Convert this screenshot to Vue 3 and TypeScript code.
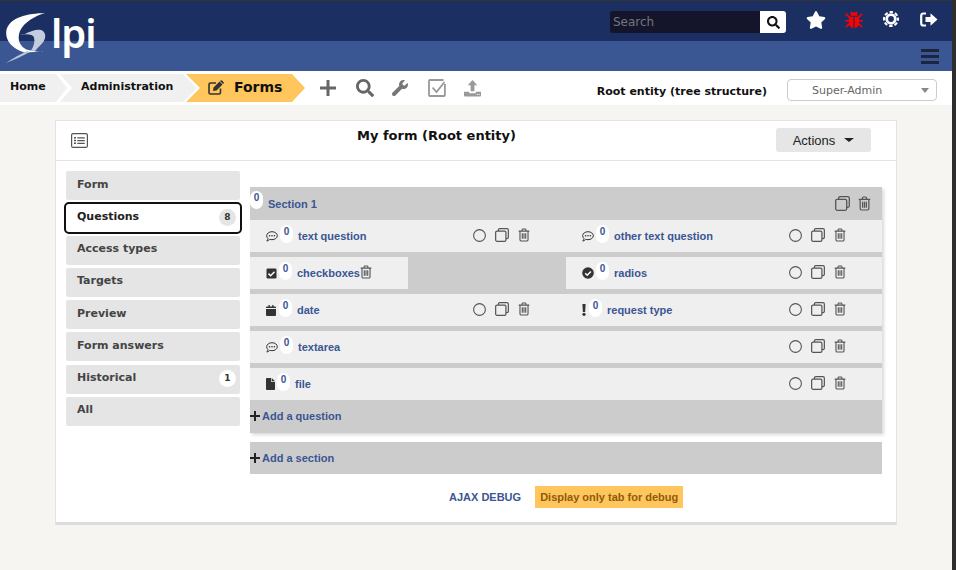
<script setup lang="ts">
interface Question {
  icon: string
  name: string
  span: number
  start?: number
  actions: 'full' | 'trash'
}

const tabs = [
  { label: 'Form' },
  { label: 'Questions', badge: '8', active: true },
  { label: 'Access types' },
  { label: 'Targets' },
  { label: 'Preview' },
  { label: 'Form answers' },
  { label: 'Historical', badge: '1' },
  { label: 'All' },
]

const questions: Question[] = [
  { icon: 'i-comment', name: 'text question', span: 2, actions: 'full' },
  { icon: 'i-comment', name: 'other text question', span: 2, actions: 'full' },
  { icon: 'i-check', name: 'checkboxes', span: 1, actions: 'trash' },
  { icon: 'i-radio', name: 'radios', span: 2, start: 3, actions: 'full' },
  { icon: 'i-cal', name: 'date', span: 2, actions: 'full' },
  { icon: 'i-bang', name: 'request type', span: 2, actions: 'full' },
  { icon: 'i-comment', name: 'textarea', span: 4, actions: 'full' },
  { icon: 'i-file', name: 'file', span: 4, actions: 'full' },
]

function cellStyle(q: Question) {
  return { gridColumn: q.start ? `${q.start} / span ${q.span}` : `span ${q.span}` }
}
</script>

<template>
  <div class="page">
    <svg class="sprite" xmlns="http://www.w3.org/2000/svg">
      <symbol id="i-trash" viewBox="0 0 14 16">
        <path d="M.8 3.500h12.400M4.800 3.200V2q0-1 1-1h2.400q1 0 1 1v1.200M2.300 3.700v9.800q0 1.500 1.500 1.500h6.400q1.500 0 1.500-1.500V3.700M5 6v6.500M7 6v6.500M9 6v6.500" fill="none" stroke="currentColor" stroke-width="1.300"/>
      </symbol>
      <symbol id="i-clone" viewBox="0 0 15 15">
        <path d="M3.700 3.200V2.200Q3.700.7 5.200.7h7.600q1.500 0 1.500 1.500v7.600q0 1.500-1.500 1.500h-1" fill="none" stroke="currentColor" stroke-width="1.300"/>
        <rect x="0.700" y="3.300" width="11" height="11" rx="1.500" fill="none" stroke="currentColor" stroke-width="1.300"/>
      </symbol>
      <symbol id="i-comment" viewBox="0 0 12 11">
        <path d="M6 .7c3 0 5.300 1.800 5.300 4S9 8.700 6 8.700c-.8 0-1.500-.1-2.200-.4C3 9.200 1.800 10 .8 10c.6-.7 1.100-1.500 1.200-2.500C1.100 6.800.7 5.800.7 4.700c0-2.200 2.300-4 5.300-4z" fill="none" stroke="currentColor" stroke-width="1"/>
        <circle cx="3.600" cy="4.700" r=".8" fill="currentColor"/><circle cx="6" cy="4.700" r=".8" fill="currentColor"/><circle cx="8.400" cy="4.700" r=".8" fill="currentColor"/>
      </symbol>
      <symbol id="i-check" viewBox="0 0 11 11">
        <rect width="10" height="10" y=".5" x=".5" rx="1.300" fill="currentColor"/>
        <path d="M2.500 5.600l2.100 2.100 3.900-4" fill="none" stroke="#fff" stroke-width="1.500"/>
      </symbol>
      <symbol id="i-radio" viewBox="0 0 12 12">
        <circle cx="6" cy="6" r="5.800" fill="currentColor"/>
        <path d="M3.200 6.200l2 2 3.700-3.800" fill="none" stroke="#fff" stroke-width="1.500"/>
      </symbol>
      <symbol id="i-cal" viewBox="0 0 10 11">
        <path d="M0 4h10v6q0 1-1 1H1q-1 0-1-1zM1 1.500h1.500V0h1.300v1.500h2.400V0h1.300v1.500H9q1 0 1 1V3H0v-.5q0-1 1-1z" fill="currentColor"/>
      </symbol>
      <symbol id="i-bang" viewBox="0 0 4 12">
        <path d="M.4 0h3.200l-.5 8H.9z" fill="currentColor"/><circle cx="2" cy="10.300" r="1.600" fill="currentColor"/>
      </symbol>
      <symbol id="i-file" viewBox="0 0 9 12">
        <path d="M0 .8Q0 0 .8 0H5v3.300q0 .7.7.7H9v7.200q0 .8-.8.8H.8Q0 12 0 11.200zM5.700 0L9 3.300H5.700z" fill="currentColor"/>
      </symbol>
    </svg>

    <header class="top-bar">
      <div class="logo">
        <svg class="logo-g" viewBox="0 0 46 52" width="46" height="52">
          <path d="M17 22c7-4 14-6 18-5 3 1 5 4 4 8-1 5-6 8-10 13l-4-.5c3-4 4-9 3-13-1-3-7-4-14-2.500z" fill="#c3ccde"/>
          <path d="M39 0C22 .5 3 4 .3 18c-1 9 5 16 14 20l4 1.500 19-1c-5 .5-12-.5-17-2C13 33 11 25 14 18 18 9 29 3 39 0z" fill="#fff"/>
          <path d="M0 50C7 45 15 41 21 38l3 1C16 43 8 47 0 50z" fill="#b9c4da"/>
        </svg>
        <span class="logo-text">lpi</span>
      </div>
      <div class="top-main">
        <div class="search">
          <span class="search-input">Search</span>
          <span class="search-btn">
            <svg viewBox="0 0 512 512" width="13" height="13"><path fill="#111" d="M505 442.700L405.300 343c-4.500-4.500-10.600-7-17-7H372c27.600-35.300 44-79.700 44-128C416 93.100 322.900 0 208 0S0 93.100 0 208s93.100 208 208 208c48.300 0 92.700-16.400 128-44v16.300c0 6.400 2.500 12.500 7 17l99.700 99.700c9.400 9.400 24.600 9.400 33.900 0l28.300-28.300c9.400-9.400 9.400-24.600.1-34zM208 336c-70.700 0-128-57.200-128-128 0-70.700 57.200-128 128-128 70.700 0 128 57.200 128 128 0 70.700-57.200 128-128 128z"/></svg>
          </span>
        </div>
        <svg class="t-icon star" viewBox="0 0 576 512" width="20" height="18"><path fill="#fff" d="M259.300 17.800L194 150.200 47.900 171.500c-26.200 3.800-36.700 36.100-17.700 54.600l105.700 103-25 145.500c-4.500 26.300 23.200 46 46.400 33.700L288 439.600l130.700 68.700c23.200 12.200 50.900-7.400 46.400-33.700l-25-145.500 105.700-103c19-18.500 8.500-50.800-17.700-54.600L382 150.200 316.700 17.800c-11.700-23.600-45.600-23.900-57.400 0z"/></svg>
        <svg class="t-icon bug" viewBox="0 0 18 18" width="18" height="18">
          <path fill="#f00" d="M5.500 4.800a3.500 3.500 0 0 1 7 0zM4 5.800h4.400V17c-2.600-.3-4.400-2-4.400-4.500zM9.600 5.800H14v6.700c0 2.500-1.800 4.200-4.400 4.500z"/>
          <path d="M.8 2.800L4.500 6.500M17.200 2.800L13.500 6.500M.3 9.700h4M13.700 9.700h4M.8 16l3.500-3.200M17.200 16l-3.500-3.200M6 1l1.300 2M12 1l-1.300 2" stroke="#f00" stroke-width="1.600" fill="none"/>
        </svg>
        <svg class="t-icon gear" viewBox="0 0 16 16" width="16" height="16">
          <circle cx="8" cy="8" r="7" fill="none" stroke="#fff" stroke-width="2" stroke-dasharray="3.500 2" stroke-dashoffset="1.700"/>
          <circle cx="8" cy="8" r="4.300" fill="none" stroke="#fff" stroke-width="2.800"/>
        </svg>
        <svg class="t-icon signout" viewBox="0 0 18 15" width="18" height="15">
          <path d="M6 1.500H3.500A2.300 2.300 0 0 0 1.200 3.800v7.400a2.300 2.300 0 0 0 2.300 2.300H6" fill="none" stroke="#fff" stroke-width="2.200"/>
          <path fill="#fff" d="M5.500 5h5V1.300L17.500 7.500l-7 6.200V10h-5z"/>
        </svg>
      </div>
    </header>
    <div class="sub-bar">
      <svg viewBox="0 0 18 15" width="18" height="15"><path d="M0 0h18v3H0zM0 6h18v3H0zM0 12h18v3H0z" fill="#1c2540"/></svg>
    </div>

    <nav class="crumb-bar">
      <div class="crumbs">
        <span class="crumb home">Home</span>
        <span class="crumb admin">Administration</span>
        <span class="crumb forms">
          <svg viewBox="0 0 16 15" width="16" height="15">
            <path d="M12.500 8.500v4Q12.500 14 11 14H2.500Q1 14 1 12.500V4.500Q1 3 2.500 3H8" fill="none" stroke="#333" stroke-width="1.600"/>
            <path d="M5.500 7.500L11.500 1.500l3 3-6 6-3.500.5zM12.500.5q.8-.6 1.500 0l1.500 1.500q.6.7 0 1.500l-.5.500-3-3z" fill="#333"/>
          </svg>
          Forms
        </span>
      </div>
      <div class="tools">
        <svg class="tool-plus" viewBox="0 0 16 16" width="16" height="16"><path d="M6.500 0h3v6.500H16v3H9.500V16h-3V9.500H0v-3h6.500z" fill="#666"/></svg>
        <svg class="tool-search" viewBox="0 0 512 512" width="18" height="18"><path fill="#666" d="M505 442.700L405.300 343c-4.500-4.500-10.600-7-17-7H372c27.600-35.300 44-79.700 44-128C416 93.100 322.900 0 208 0S0 93.100 0 208s93.100 208 208 208c48.300 0 92.700-16.400 128-44v16.300c0 6.400 2.500 12.500 7 17l99.700 99.700c9.400 9.400 24.600 9.400 33.900 0l28.300-28.300c9.400-9.400 9.400-24.600.1-34zM208 336c-70.700 0-128-57.200-128-128 0-70.700 57.200-128 128-128 70.700 0 128 57.200 128 128 0 70.700-57.200 128-128 128z"/></svg>
        <svg class="tool-wrench" viewBox="0 0 512 512" width="16" height="16"><path fill="#777" d="M507.730 109.100c-2.240-9.030-13.540-12.090-20.120-5.510l-74.360 74.360-67.880-11.310-11.310-67.880 74.360-74.360c6.620-6.620 3.430-17.900-5.660-20.160-47.380-11.740-99.550.91-136.580 37.930-39.640 39.640-50.550 97.100-34.050 147.200L18.740 402.760c-24.990 24.990-24.990 65.510 0 90.500 24.990 24.990 65.510 24.990 90.500 0l213.210-213.210c50.120 16.710 107.470 5.680 147.370-34.220 37.070-37.070 49.700-89.320 37.910-136.730z"/></svg>
        <svg class="tool-check" viewBox="0 0 18 18" width="18" height="18"><path d="M16.900 5v11q0 1-1 1H2q-1 0-1-1V2q0-1 1-1h13.500" fill="none" stroke="#999" stroke-width="1.800"/><path d="M4.500 8.500l4 4.500L16.500 3" fill="none" stroke="#999" stroke-width="1.800"/></svg>
        <svg viewBox="0 0 18 18" width="17" height="17"><path d="M9 0l5 5.500h-3v6.500H7V5.500H4zM0 12.500h5.500V14h7v-1.500H18v4q0 1-1 1H1q-1 0-1-1z" fill="#999"/><path d="M13.500 15.300h1.200M15.600 15.300h1.200" stroke="#fff" stroke-width="1"/></svg>
      </div>
      <div class="entity">Root entity (tree structure)</div>
      <div class="profile"><span>Super-Admin</span><i></i></div>
    </nav>

    <main class="content">
      <section class="head-card">
        <svg class="list-icon" viewBox="0 0 17 15" width="17" height="15">
          <rect x=".6" y=".6" width="15.800" height="13.800" rx="1.500" fill="none" stroke="#555" stroke-width="1.200"/>
          <path d="M3 4h2v1.500H3zM3 6.800h2v1.500H3zM3 9.600h2v1.500H3zM6.300 4.200h7.500v1.200H6.300zM6.300 7h7.500v1.200H6.300zM6.300 9.800h7.500V11H6.300z" fill="#555"/>
        </svg>
        <h1>My form (Root entity)</h1>
        <button class="actions" type="button">Actions<i></i></button>
      </section>

      <section class="body-card">
        <aside class="tabs">
          <div v-for="t in tabs" :key="t.label" class="tab" :class="{ active: t.active }">
            <span>{{ t.label }}</span>
            <b v-if="t.badge" class="tab-badge">{{ t.badge }}</b>
          </div>
        </aside>

        <div class="editor">
          <div class="section">
            <div class="section-head">
              <span class="count">0</span>
              <a class="link sec-title">Section 1</a>
              <span class="sec-actions">
                <svg width="15" height="15"><use href="#i-clone"/></svg>
                <svg width="13" height="15"><use href="#i-trash"/></svg>
              </span>
            </div>
            <div class="grid">
              <div v-for="q in questions" :key="q.name" class="cell" :style="cellStyle(q)">
                <svg class="q-icon" :class="q.icon"><use :href="'#' + q.icon"/></svg>
                <span class="count">0</span>
                <a class="link q-name">{{ q.name }}</a>
                <span class="q-actions" :class="q.actions">
                  <template v-if="q.actions === 'full'">
                    <svg width="13" height="13" viewBox="0 0 13 13"><circle cx="6.500" cy="6.500" r="5.900" fill="none" stroke="#555" stroke-width="1.100"/></svg>
                    <svg width="14" height="14"><use href="#i-clone"/></svg>
                  </template>
                  <svg width="12" height="14"><use href="#i-trash"/></svg>
                </span>
              </div>
            </div>
            <div class="add-row first"><span class="plus"></span><a class="link">Add a question</a></div>
          </div>
          <div class="add-row add-section"><span class="plus"></span><a class="link">Add a section</a></div>
          <div class="debug">
            <a class="link ajax">AJAX DEBUG</a>
            <span class="debug-btn">Display only tab for debug</span>
          </div>
        </div>
      </section>
    </main>
  </div>
</template>

<style>
html, body { margin: 0; background: #f6f5f1; }
</style>

<style scoped>
.page {
  width: 952px;
  height: 570px;
  box-sizing: content-box;
  border-right: 4px solid #2e2e2e;
  background: #f6f5f1;
  font-family: "DejaVu Sans", sans-serif;
  position: relative;
  overflow: hidden;
}
.sprite { display: none; }
svg { flex: none; display: block; }

.top-bar {
  height: 40px;
  border-top: 1px solid #333;
  background: #1b2f62;
  display: flex;
  justify-content: flex-end;
}
.sub-bar {
  height: 30px;
  background: #3a5693;
  display: flex;
  justify-content: flex-end;
  align-items: center;
  padding-right: 13px;
}
.logo {
  position: absolute;
  left: 6px;
  top: 13px;
  display: flex;
}
.logo-text {
  position: absolute;
  left: 45px;
  top: -6px;
  color: #fff;
  font: 600 40px/52px "Noto Sans", sans-serif;
  letter-spacing: -1px;
}
.top-main {
  display: flex;
  align-items: flex-start;
  padding-top: 10px;
  padding-right: 14px;
}
.search {
  display: flex;
  width: 176px;
  height: 22px;
  border-radius: 3px;
  overflow: hidden;
  margin-right: 20px;
}
.search-input {
  flex: 1;
  background: #14152a;
  color: #74757f;
  font-size: 12px;
  line-height: 22px;
  padding-left: 3px;
}
.search-btn {
  width: 26px;
  background: #fff;
  display: flex;
  align-items: center;
  justify-content: center;
}
.star { margin-right: 19px; }
.bug { margin-right: 20px; }
.gear { margin-right: 21px; }
.signout { margin-top: 1px; }

.crumb-bar {
  height: 34px;
  background: #fff;
  display: flex;
  align-items: center;
}
.crumbs { display: flex; height: 28px; }
.crumb {
  height: 28px;
  display: flex;
  align-items: center;
  font-weight: 700;
  font-size: 11px;
  color: #111;
  background: #f0f0f0;
  flex: none;
  box-sizing: border-box;
  padding-bottom: 4px;
}
.home {
  width: 67px;
  padding-left: 10px;
  clip-path: polygon(0 0, 56px 0, 67px 50%, 56px 100%, 0 100%);
}
.admin {
  width: 137px;
  margin-left: -7px;
  padding-left: 21px;
  clip-path: polygon(0 0, 123px 0, 137px 50%, 123px 100%, 0 100%, 12px 50%);
}
.forms {
  width: 119px;
  margin-left: -11px;
  padding-left: 22px;
  padding-bottom: 2px;
  gap: 10px;
  font-size: 14px;
  background: #ffc65d;
  clip-path: polygon(0 0, 106px 0, 119px 50%, 106px 100%, 0 100%, 14px 50%);
}
.tools {
  display: flex;
  align-items: center;
  margin-left: 15px;
}
.tool-plus, .tool-wrench { margin-right: 20px; }
.tool-search, .tool-check { margin-right: 18px; }
.entity {
  font-weight: 700;
  font-size: 11px;
  color: #111;
  margin-left: auto;
  margin-right: 20px;
  margin-top: 6px;
  white-space: nowrap;
  flex: none;
}
.profile {
  width: 150px;
  height: 22px;
  box-sizing: border-box;
  border: 1px solid #ccc;
  border-radius: 4px;
  margin-top: 4px;
  margin-right: 15px;
  display: flex;
  align-items: center;
  font-size: 11px;
  color: #666;
  padding-left: 24px;
  position: relative;
}
.profile i {
  position: absolute;
  right: 7px;
  top: 8px;
  border: 4px solid transparent;
  border-top: 5px solid #888;
  border-bottom: 0;
}

.content {
  width: 842px;
  margin: 15px 0 0 55px;
}
.head-card {
  height: 41px;
  box-sizing: border-box;
  background: #fff;
  border: 1px solid #e3e3e3;
  display: flex;
  align-items: flex-start;
  position: relative;
}
.list-icon { margin: 12px 0 0 15px; }
.head-card h1 {
  margin: 6px 0 0 269px;
  font-size: 13px;
  line-height: 18px;
  font-weight: 700;
  color: #111;
  white-space: nowrap;
}
.actions {
  position: absolute;
  left: 720px;
  top: 7px;
  width: 95px;
  height: 24px;
  border: 0;
  border-radius: 3px;
  background: #e6e6e6;
  color: #222;
  font: 13px "Liberation Sans", sans-serif;
  display: flex;
  align-items: center;
  justify-content: center;
  gap: 9px;
  padding: 0;
}
.actions i {
  border: 5px solid transparent;
  border-top: 4px solid #222;
  border-bottom: 0;
}
.body-card {
  height: 364px;
  box-sizing: border-box;
  background: #fff;
  border: 1px solid #e3e3e3;
  border-top: 0;
  border-bottom: 3px solid #dcdcdc;
  display: flex;
}
.tabs {
  width: 174px;
  margin: 10px 0 0 10px;
  flex: none;
}
.tab {
  height: 29px;
  margin-bottom: 3.280px;
  background: #e5e5e5;
  border-radius: 2px;
  font-weight: 700;
  font-size: 11px;
  color: #444;
  display: flex;
  padding: 6.600px 4px 0 11px;
  box-sizing: border-box;
  position: relative;
}
.tab.active {
  background: #fff;
  color: #222;
  outline: 2px solid #111;
  border-radius: 3px;
  height: 28px;
  margin-bottom: 4.280px;
  top: 1px;
  padding-top: 5.600px;
}
.tab-badge {
  position: absolute;
  right: 4px;
  top: 5px;
  width: 17px;
  height: 17px;
  border-radius: 50%;
  background: #fff;
  color: #333;
  font-size: 9px;
  line-height: 17px;
  text-align: center;
}
.active .tab-badge { background: #e5e5e5; }

.editor {
  width: 632px;
  margin: 26px 0 0 10px;
  flex: none;
}
.link {
  font-family: "Liberation Sans", sans-serif;
  font-weight: 700;
  font-size: 11px;
  color: #3a5693;
  white-space: nowrap;
}
.count {
  width: 13px;
  height: 18px;
  border-radius: 7px;
  background: #fff;
  color: #3a5693;
  font: 700 10px/14px "Liberation Sans", sans-serif;
  text-align: center;
  flex: none;
  margin-top: -4px;
}
.section {
  background: #ccc;
  box-shadow: 2px 2px 3px rgba(0, 0, 0, 0.15);
}
.section-head {
  height: 33px;
  display: flex;
  align-items: center;
  color: #555;
}
.section-head .count { margin-top: -7px; }
.sec-title { margin-left: 5px; }
.sec-actions {
  margin-left: auto;
  display: flex;
  gap: 8px;
  margin-right: 11px;
  align-items: center;
}
.grid {
  display: grid;
  grid-template-columns: repeat(4, 158px);
  grid-auto-rows: 32px;
  row-gap: 5px;
}
.cell {
  background: #efefef;
  display: flex;
  align-items: center;
  padding: 0 35px 0 16px;
  color: #555;
  min-width: 0;
}
.q-icon { color: #333; margin-right: 2px; }
.i-comment { width: 12px; height: 11px; }
.i-check { width: 11px; height: 11px; }
.i-radio { width: 12px; height: 12px; }
.i-cal { width: 10px; height: 11px; margin-right: 3px; }
.i-bang { width: 4px; height: 12px; margin-right: 3px; }
.i-file { width: 9px; height: 12px; margin-right: 2px; }
.q-name { margin-left: 5px; }
.q-actions {
  display: flex;
  align-items: center;
  margin-left: auto;
  margin-top: -2px;
  flex: none;
}
.q-actions.full { gap: 9px; width: 58px; }
.q-actions.trash { margin-left: 0; margin-right: -30px; }
.add-row {
  height: 33px;
  display: flex;
  align-items: center;
}
.add-row.first { padding-bottom: 2px; box-sizing: border-box; }
.plus {
  width: 10px;
  height: 10px;
  margin-right: 2px;
  background:
    linear-gradient(#222, #222) center / 100% 2px no-repeat,
    linear-gradient(#222, #222) center / 2px 100% no-repeat;
}
.add-section {
  height: 32px;
  background: #ccc;
  margin-top: 9px;
}
.debug {
  display: flex;
  align-items: center;
  margin: 12px 0 0 199px;
}
.debug-btn {
  margin-left: 14px;
  background: #ffc65d;
  color: #8f5a0a;
  font: 700 11px/22px "Liberation Sans", sans-serif;
  padding: 0 5px;
  white-space: nowrap;
}
</style>
